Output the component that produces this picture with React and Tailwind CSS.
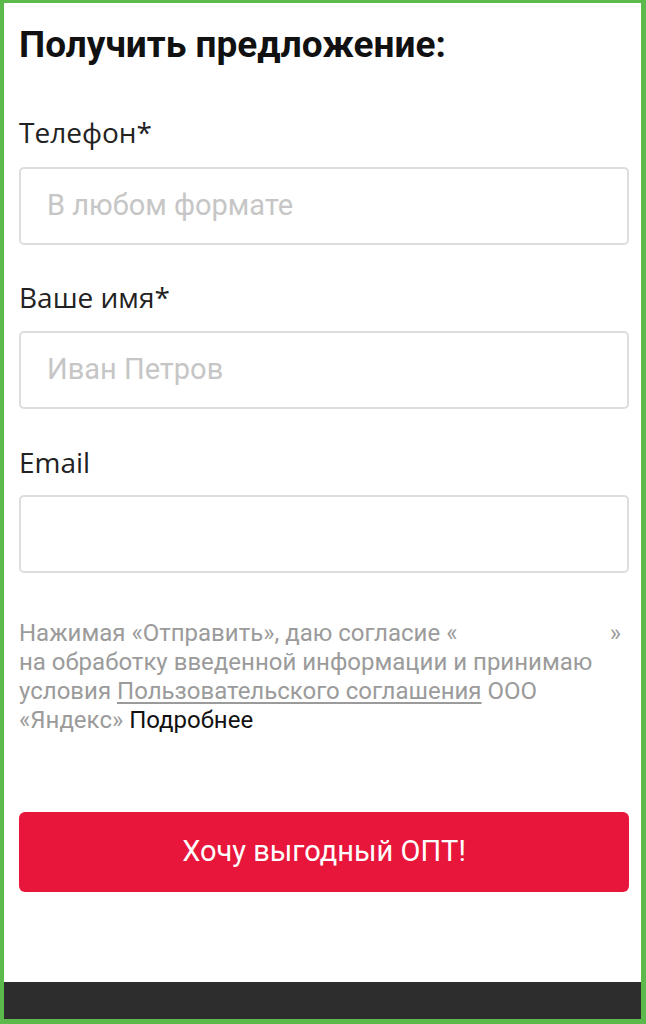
export default function App() {
  return (
    <div className="w-[646px] h-[1024px] bg-[#5cba4c] pl-[4px] pt-[3px] pr-[5px] pb-[5px]">
      <div className="h-full bg-white flex flex-col">
        <div className="flex-1 pl-[15px] pr-[12px] flex flex-col">
          <h1 className="mt-[22px] text-[37px] leading-[40px] font-bold text-[#111111] font-['Roboto',sans-serif]">
            Получить предложение:
          </h1>

          <label className="mt-[51px] text-[28px] leading-[32px] text-[#222222] font-['Open_Sans',sans-serif]">
            Телефон*
          </label>
          <div className="mt-[19px] h-[78px] border-2 border-[#dddddd] rounded-[5px] flex items-center pl-[26px]">
            <span className="text-[29px] text-[#c6c6c6] font-['Roboto',sans-serif]">В любом формате</span>
          </div>

          <label className="mt-[36px] text-[28px] leading-[32px] text-[#222222] font-['Open_Sans',sans-serif]">
            Ваше имя*
          </label>
          <div className="mt-[18px] h-[78px] border-2 border-[#dddddd] rounded-[5px] flex items-center pl-[26px]">
            <span className="text-[29px] text-[#c6c6c6] font-['Roboto',sans-serif]">Иван Петров</span>
          </div>

          <label className="mt-[37px] text-[28px] leading-[32px] text-[#222222] font-['Open_Sans',sans-serif]">
            Email
          </label>
          <div className="mt-[17px] h-[78px] border-2 border-[#dddddd] rounded-[5px]"></div>

          <div className="mt-[46px] pr-[8px] text-[24px] leading-[29px] text-[#9b9b9b] font-['Roboto',sans-serif]">
            <div className="flex justify-between">
              <span>Нажимая «Отправить», даю согласие «</span>
              <span>»</span>
            </div>
            <div>на обработку введенной информации и принимаю</div>
            <div>
              условия <span className="underline underline-offset-[3px]">Пользовательского соглашения</span> ООО
            </div>
            <div>
              «Яндекс» <span className="text-[#111111]">Подробнее</span>
            </div>
          </div>

          <button className="mt-[77px] h-[80px] w-full bg-[#e8163a] rounded-[6px] text-white text-[29px] font-['Roboto',sans-serif]">
            Хочу выгодный ОПТ!
          </button>
        </div>
        <div className="h-[37px] bg-[#2d2d2d]"></div>
      </div>
    </div>
  );
}
